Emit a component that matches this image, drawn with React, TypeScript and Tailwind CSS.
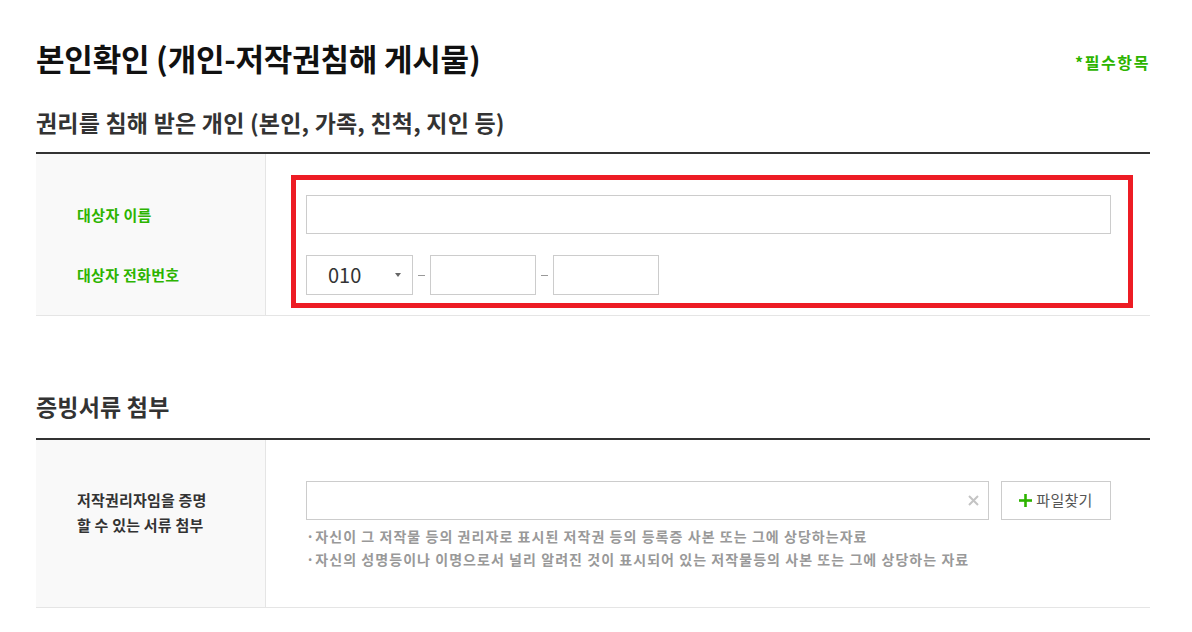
const font = { fontFamily: '"Noto Sans CJK KR", "Noto Sans", sans-serif' };

function Dash() {
  return <span className="mx-[5px] h-px w-[7px] bg-[#999]"></span>;
}

export default function App() {
  return (
    <div className="min-h-screen bg-white" style={font}>
      <div className="ml-[36px] w-[1114px] pt-[40px]">
        <div className="flex items-center justify-between">
          <h1 className="text-[31px] font-bold leading-[36px] tracking-[-0.2px] text-[#111]">
            본인확인 (개인-저작권침해 게시물)
          </h1>
          <span className="mt-[8px] text-[16px] font-bold tracking-[1.6px] text-[#2db400]">*필수항목</span>
        </div>

        <h2 className="mt-[32px] text-[23px] font-bold leading-[28px] tracking-[0.2px] text-[#333]">
          권리를 침해 받은 개인 (본인, 가족, 친척, 지인 등)
        </h2>

        <div className="mt-[16px] flex border-t-2 border-b border-t-[#333] border-b-[#e5e5e5]">
          <div className="flex w-[230px] flex-col gap-[20px] border-r border-[#e5e5e5] bg-[#f9f9f9] pl-[41px] pt-[41px]">
            <div className="text-[15px] font-bold leading-[40px] tracking-[0.4px] text-[#2db400]">대상자 이름</div>
            <div className="text-[15px] font-bold leading-[40px] tracking-[0.3px] text-[#2db400]">대상자 전화번호</div>
          </div>
          <div className="flex-1 pb-[7px] pl-[25px] pr-[17px] pt-[21px]">
            <div className="w-[842px] border-[5px] border-[#ed1c24] pb-[8px] pl-[10px] pr-[17px] pt-[15px]">
              <input className="block h-[39px] w-full border border-[#ccc] bg-white outline-none" />
              <div className="mt-[21px] flex items-center">
                <div className="flex h-[40px] w-[107px] items-center justify-between border border-[#ccc] pl-[21px] pr-[11px]">
                  <span className="text-[20px] text-[#333]">010</span>
                  <span className="h-0 w-0 border-l-[3px] border-r-[3px] border-t-[4px] border-l-transparent border-r-transparent border-t-[#666]"></span>
                </div>
                <Dash />
                <input className="h-[40px] w-[106px] border border-[#ccc] outline-none" />
                <Dash />
                <input className="h-[40px] w-[106px] border border-[#ccc] outline-none" />
              </div>
            </div>
          </div>
        </div>

        <h2 className="mt-[76px] text-[23px] font-bold leading-[28px] tracking-[0.2px] text-[#333]">증빙서류 첨부</h2>

        <div className="mt-[18px] flex h-[170px] border-t-2 border-b border-t-[#333] border-b-[#e5e5e5]">
          <div className="w-[230px] border-r border-[#e5e5e5] bg-[#f9f9f9] pl-[41px] pt-[47px]">
            <p className="text-[15px] font-bold leading-[25px] tracking-[0.2px] text-[#333]">
              저작권리자임을 증명
              <br />할 수 있는 서류 첨부
            </p>
          </div>
          <div className="flex-1 pl-[40px] pt-[41px]">
            <div className="flex items-center gap-[12px]">
              <div className="flex h-[39px] w-[683px] items-center justify-end border border-[#ccc] pr-[9px]">
                <svg width="11" height="11" viewBox="0 0 11 11" stroke="#c4c4c4" strokeWidth="2">
                  <path d="M1 1l9 9M10 1l-9 9" />
                </svg>
              </div>
              <button className="flex h-[39px] w-[110px] items-center justify-center gap-[4px] border border-[#ccc] bg-white text-[15px] tracking-[0.3px] text-[#555]">
                <svg width="13" height="13" viewBox="0 0 12 12" fill="#2db400">
                  <rect x="4.8" y="0" width="2.4" height="12" />
                  <rect x="0" y="4.8" width="12" height="2.4" />
                </svg>
                파일찾기
              </button>
            </div>
            <ul className="mt-[5px] text-[14px] font-bold leading-[23px] tracking-[1.05px] text-[#999]">
              <li>·자신이 그 저작물 등의 권리자로 표시된 저작권 등의 등록증 사본 또는 그에 상당하는자료</li>
              <li>·자신의 성명등이나 이명으로서 널리 알려진 것이 표시되어 있는 저작물등의 사본 또는 그에 상당하는 자료</li>
            </ul>
          </div>
        </div>
      </div>
    </div>
  );
}
